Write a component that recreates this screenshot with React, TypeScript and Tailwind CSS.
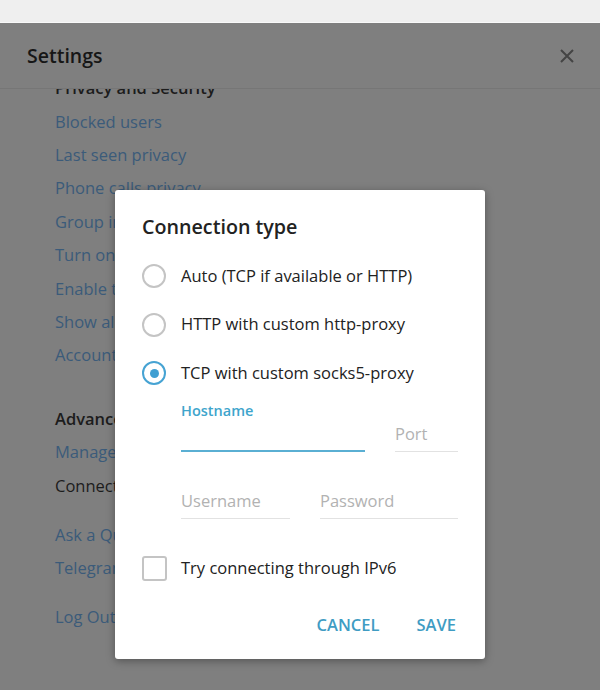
import React from "react";

const font = { fontFamily: '"Open Sans", "Noto Sans", sans-serif' };

const privacyItems = [
  "Blocked users",
  "Last seen privacy",
  "Phone calls privacy",
  "Group invite settings",
  "Turn on local passcode",
  "Enable two-step verification",
  "Show all sessions",
  "Account self-destruct",
];

const Radio = ({ checked, label }: { checked?: boolean; label: string }) => (
  <div className="flex items-center h-[48.5px]">
    <div
      className={
        "w-[24px] h-[24px] rounded-full border-2 flex items-center justify-center " +
        (checked ? "border-[#46a3d3]" : "border-[#c4c4c4]")
      }
    >
      {checked && <div className="w-[9px] h-[9px] rounded-full bg-[#3f9fd2]" />}
    </div>
    <span className="ml-[15px] text-[16.5px] text-[#222]">{label}</span>
  </div>
);

const Field = ({ placeholder, width }: { placeholder: string; width: string }) => (
  <div className={width + " h-[31px] border-b border-[#e2e2e2] pt-[1px]"}>
    <span className="text-[16.5px] leading-[22px] text-[#b2b2b2]">{placeholder}</span>
  </div>
);

const ConnectionDialog = () => (
  <div className="absolute left-[115px] top-[190px] w-[370px] h-[469px] bg-white rounded-[3px] shadow-[0_2px_8px_rgba(0,0,0,0.35)] pl-[27px] pr-[27px] pt-[24px]">
    <h2 className="text-[19.7px] leading-[26px] font-semibold text-[#222]">Connection type</h2>
    <div className="mt-[12px]">
      <Radio label="Auto (TCP if available or HTTP)" />
      <Radio label="HTTP with custom http-proxy" />
      <Radio checked label="TCP with custom socks5-proxy" />
    </div>
    <div className="ml-[39px] mt-[3px]">
      <div className="flex items-end gap-[30px]">
        <div className="w-[184px]">
          <div className="text-[14.5px] leading-[20px] font-semibold text-[#3ea5cc]">Hostname</div>
          <div className="h-[31px] border-b-2 border-[#5aafd3]" />
        </div>
        <Field placeholder="Port" width="w-[63px]" />
      </div>
      <div className="flex items-end gap-[30px] mt-[36px]">
        <Field placeholder="Username" width="w-[109px]" />
        <Field placeholder="Password" width="w-[138px]" />
      </div>
    </div>
    <div className="flex items-center mt-[38px] h-[24px]">
      <div className="w-[25px] h-[25px] rounded-[3px] border-2 border-[#c4c4c4]" />
      <span className="ml-[14px] text-[16.5px] text-[#222]">Try connecting through IPv6</span>
    </div>
    <div className="flex justify-end gap-[37px] pr-[2px] mt-[32px]">
      <button className="text-[16.5px] leading-[24px] font-semibold text-[#3f9cc3]">CANCEL</button>
      <button className="text-[16.5px] leading-[24px] font-semibold text-[#3f9cc3]">SAVE</button>
    </div>
  </div>
);

export default function App() {
  return (
    <div className="relative w-[600px] h-[690px] overflow-hidden bg-[#7f7f7f]" style={font}>
      <div className="h-[23px] bg-[#efefef] border-b border-[#f8f8f8]" />
      <div className="h-[66px] flex items-center justify-between pl-[27px] pr-[25px] border-b border-[#767676]">
        <span className="text-[19.5px] font-semibold text-[#161616]">Settings</span>
        <svg width="16" height="16" viewBox="0 0 16 16" className="text-[#444]">
          <path d="M2 2L14 14M14 2L2 14" stroke="currentColor" strokeWidth="2" />
        </svg>
      </div>
      <div className="h-[601px] overflow-hidden pl-[55px]">
        <div className="-mt-[17px]">
          <div className="h-[33.4px] flex items-center text-[16.5px] font-semibold text-[#1c1c1c]">
            Privacy and Security
          </div>
          {privacyItems.map((item) => (
            <div key={item} className="h-[33.4px] flex items-center text-[16.5px] text-[#3b5b7a]">
              {item}
            </div>
          ))}
          <div className="mt-[30px] h-[33.4px] flex items-center text-[16.5px] font-semibold text-[#1c1c1c]">
            Advanced Settings
          </div>
          <div className="h-[33.4px] flex items-center text-[16.5px] text-[#3b5b7a]">Manage local storage</div>
          <div className="h-[33.4px] flex items-center text-[16.5px] text-[#1c1c1c]">Connection type</div>
          <div className="mt-[16px] h-[33.4px] flex items-center text-[16.5px] text-[#3b5b7a]">Ask a Question</div>
          <div className="h-[33.4px] flex items-center text-[16.5px] text-[#3b5b7a]">Telegram FAQ</div>
          <div className="mt-[15px] h-[33.4px] flex items-center text-[16.5px] text-[#3b5b7a]">Log Out</div>
        </div>
      </div>
      <ConnectionDialog />
    </div>
  );
}
